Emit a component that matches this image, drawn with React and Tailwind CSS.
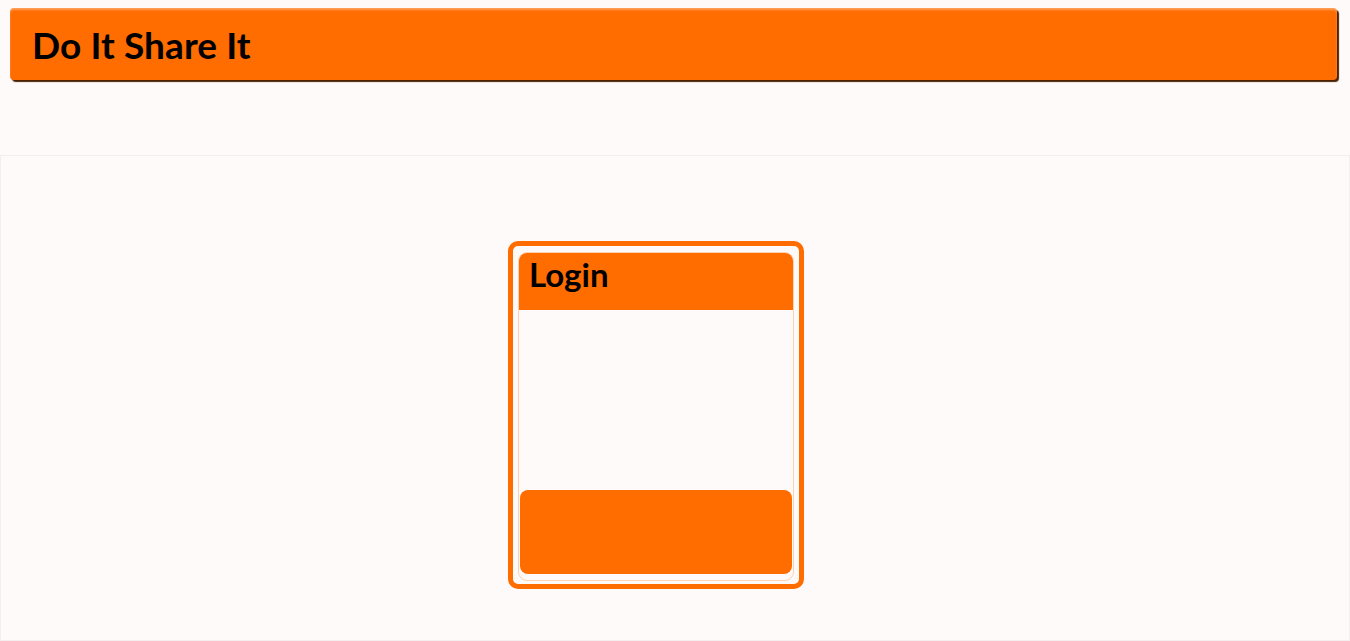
import React from 'react';

const App = () => {
  return (
    <div className="min-h-screen bg-[#fffafa] pt-[8px] font-['Lato',sans-serif]">
      <header className="mx-[10px] mr-[13px] flex h-[72px] items-center rounded-[4px] bg-[#ff6c00] px-[22px] shadow-[inset_0_2px_2px_rgba(255,255,255,0.35),2px_2px_1px_#4a2200]">
        <h1 className="text-[37px] font-bold leading-none tracking-[0.1px] text-black">Do It Share It</h1>
      </header>

      <div className="h-[75px]" />

      <main className="flex h-[486px] border border-[#f4eeee] pl-[507px] pt-[85px]">
        <div className="flex h-[348px] w-[296px] flex-col rounded-[10px] border-[5px] border-[#ff6c00] px-[5px] pt-[6px] pb-[3px]">
          <div className="flex flex-1 flex-col rounded-[9px] border border-[#ffd2b2]">
            <div className="h-[57px] rounded-t-[8px] bg-[#ff6c00] px-[10px] pt-[2px]">
              <h2 className="text-[33px] font-bold leading-[1.2] text-black">Login</h2>
            </div>
            <div className="flex-1" />
            <div className="mx-[1px] mb-[6px] h-[84px] rounded-[8px] bg-[#ff6c00]" />
          </div>
        </div>
      </main>
    </div>
  );
};

export default App;
